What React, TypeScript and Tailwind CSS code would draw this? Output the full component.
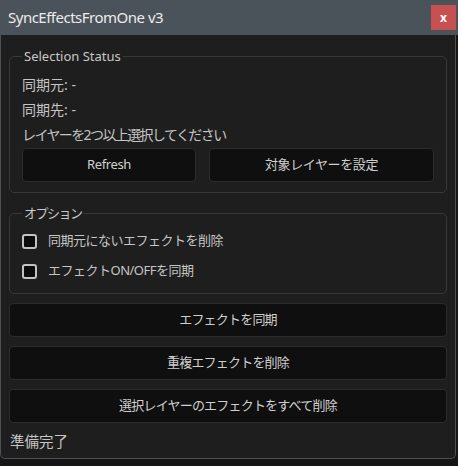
export default function App() {
  const font = "font-['Noto_Sans','Noto_Sans_CJK_JP',sans-serif]"
  const btn =
    "h-[34px] rounded-[4px] border border-[#2c2c2c] bg-[#0f0f0f] text-[13px] tracking-[-0.4px] text-[#cfcfcf] flex items-center justify-center"

  return (
    <div className={`w-[458px] h-[466px] bg-[#151515] ${font}`}>
      {/* タイトルバー */}
      <div className="h-[35px] bg-[#4a5359] flex items-center pl-[8px] pr-[2px]">
        <span className="text-[15px] text-[#ececec] tracking-[-0.5px]">SyncEffectsFromOne v3</span>
        <button className="ml-auto w-[25px] h-[25px] bg-[#c75050] flex items-center justify-center text-white text-[12px] font-bold leading-none">
          x
        </button>
      </div>

      <div className="w-[456px] h-[424px] bg-[#1e1e1e] border-x border-b border-[#4b5056] rounded-b-[5px] px-[8px] pt-[12px] flex flex-col">
        <fieldset className="border border-[#383838] rounded-[5px] px-[12px] pb-[10px]">
          <legend className="px-[2px] text-[13px] leading-[18px] text-[#c8c8c8]">Selection Status</legend>
          <div className="pt-[7px] text-[14px] text-[#c5c5c5]">
            <div className="h-[25px] leading-[25px]">同期元: -</div>
            <div className="h-[25px] leading-[25px]">同期先: -</div>
            <div className="h-[25px] leading-[25px] tracking-[-1.6px]">レイヤーを2つ以上選択してください</div>
          </div>
          <div className="mt-[1px] flex gap-[13px]">
            <button className={`${btn} h-[33px] w-[174px] text-[13.5px]`}>Refresh</button>
            <button className={`${btn} h-[33px] flex-1`}>対象レイヤーを設定</button>
          </div>
        </fieldset>

        <fieldset className="mt-[11px] border border-[#383838] rounded-[5px] px-[12px] pb-[7px]">
          <legend className="px-[2px] text-[13px] leading-[18px] tracking-[-1.5px] text-[#c8c8c8]">オプション</legend>
          <div className="pt-[4px] text-[13px] tracking-[-0.5px] text-[#c5c5c5]">
            <label className="h-[30px] flex items-center gap-[11px]">
              <span className="w-[15px] h-[15px] rounded-[3px] border-2 border-[#c2c2c2] bg-[#0b0b0b]" />
              同期元にないエフェクトを削除
            </label>
            <label className="h-[30px] flex items-center gap-[11px]">
              <span className="w-[15px] h-[15px] rounded-[3px] border-2 border-[#c2c2c2] bg-[#0b0b0b]" />
              エフェクトON/OFFを同期
            </label>
          </div>
        </fieldset>

        <div className="mt-[9px] flex flex-col gap-[9px]">
          <button className={`${btn} tracking-[-0.8px]`}>エフェクトを同期</button>
          <button className={`${btn} tracking-[-0.8px]`}>重複エフェクトを削除</button>
          <button className={`${btn} tracking-[-0.8px]`}>選択レイヤーのエフェクトをすべて削除</button>
        </div>

        <div className="mt-[8px] h-[20px] leading-[20px] text-[14.5px] text-[#c5c5c5] px-[1px]">準備完了</div>
      </div>
    </div>
  )
}
